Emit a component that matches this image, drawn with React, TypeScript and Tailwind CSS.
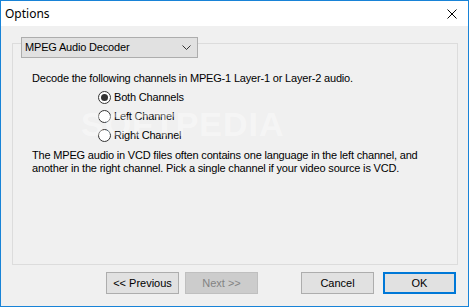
import { useState } from 'react'

const channels = ['Both Channels', 'Left Channel', 'Right Channel']

function Radio({ checked }: { checked: boolean }) {
  return (
    <span className="w-[13px] h-[13px] rounded-full border border-[#333333] bg-white flex items-center justify-center shrink-0">
      {checked && <span className="w-[7px] h-[7px] rounded-full bg-[#333333]" />}
    </span>
  )
}

function DlgButton({ label, disabled, primary }: { label: string; disabled?: boolean; primary?: boolean }) {
  return (
    <button
      className={`w-[73px] h-[22px] flex items-center justify-center text-[11px] leading-none ${
        primary
          ? 'border-2 border-[#0078d7] bg-[#e1e1e1] text-black'
          : disabled
            ? 'border border-[#bfbfbf] bg-[#cccccc] text-[#838383]'
            : 'border border-[#adadad] bg-[#e1e1e1] text-black'
      }`}
    >
      {label}
    </button>
  )
}

export default function App() {
  const [selected, setSelected] = useState(0)

  return (
    <div
      className="w-[469px] h-[307px] border border-[#1883d7] flex flex-col relative overflow-hidden"
      style={{ fontFamily: '"Liberation Sans", Arial, sans-serif' }}
    >
      {/* Title bar */}
      <div className="h-[25px] bg-white flex items-center justify-between pl-[4px] pr-[11px]">
        <span className="text-[12px] text-black" style={{ fontFamily: '"Noto Sans", "Liberation Sans", sans-serif' }}>
          Options
        </span>
        <svg width="10" height="10" viewBox="0 0 10 10" className="mt-[1px]">
          <path d="M0.5 0.5 L9.5 9.5 M9.5 0.5 L0.5 9.5" stroke="#000" strokeWidth="1" />
        </svg>
      </div>

      {/* Body */}
      <div className="flex-1 bg-[#f0f0f0] pl-[11px] pt-[17px]">
        <div className="w-[446px] h-[222px] border border-[#dcdcdc] flex flex-col tracking-[-0.18px]">
          <div className="-mt-[7px] ml-[8px] w-[177px] h-[21px] border border-[#adadad] bg-[#e1e1e1] flex items-center justify-between pl-[3px] pr-[6px]">
            <span className="text-[11px] text-black">MPEG Audio Decoder</span>
            <svg width="9" height="5" viewBox="0 0 9 5">
              <path d="M0.5 0.5 L4.5 4.5 L8.5 0.5" stroke="#333" strokeWidth="1" fill="none" />
            </svg>
          </div>

          <p className="mt-[14px] ml-[19px] text-[11px] leading-[13px] text-black">
            Decode the following channels in MPEG-1 Layer-1 or Layer-2 audio.
          </p>

          <div className="mt-[3px] ml-[85px] flex flex-col">
            {channels.map((c, i) => (
              <label
                key={c}
                className="h-[19px] flex items-center gap-[3px] text-[11px] text-black"
                onClick={() => setSelected(i)}
              >
                <Radio checked={selected === i} />
                {c}
              </label>
            ))}
          </div>

          <p className="mt-[4px] ml-[19px] text-[11px] leading-[13px] text-black w-[400px]">
            The MPEG audio in VCD files often contains one language in the left channel, and another in the right
            channel. Pick a single channel if your video source is VCD.
          </p>
        </div>

        <div className="mt-[7px] flex">
          <div className="ml-[94px] flex gap-[6px]">
            <DlgButton label="<< Previous" />
            <DlgButton label="Next >>" disabled />
          </div>
          <div className="ml-[43px] flex gap-[9px]">
            <DlgButton label="Cancel" />
            <DlgButton label="OK" primary />
          </div>
        </div>
      </div>

      {/* watermark */}
      <div className="absolute left-[80px] top-[98px] text-[34px] font-bold tracking-[1px] text-white/40 pointer-events-none select-none">
        SOFTPEDIA
      </div>
    </div>
  )
}
